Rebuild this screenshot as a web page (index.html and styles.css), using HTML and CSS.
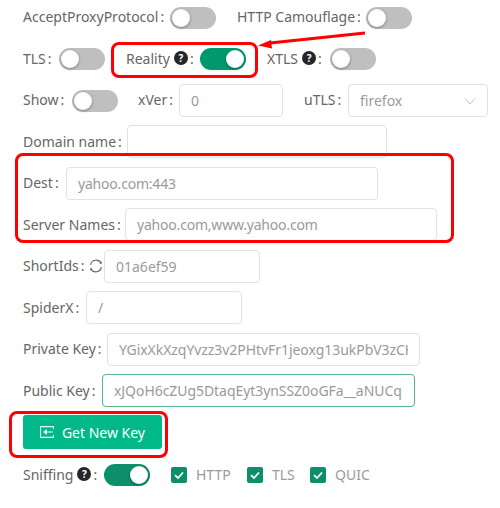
FILE: index.html
```html
<!DOCTYPE html>
<html lang="en">
<head>
<meta charset="utf-8">
<title>Reality settings</title>
<link rel="stylesheet" href="styles.css">
</head>
<body>
<main class="form">
  <div class="row">
    <span class="label w-accept">AcceptProxyProtocol<i class="colon">:</i></span>
    <span class="switch"><b class="knob"></b></span>
    <span class="label ml-21 w-camo">HTTP Camouflage<i class="colon">:</i></span>
    <span class="switch"><b class="knob"></b></span>
  </div>
  <div class="row">
    <span class="label w-tls">TLS<i class="colon">:</i></span>
    <span class="switch"><b class="knob"></b></span>
    <span class="label ml-21 w-reality">Reality<span class="help">?</span><i class="colon">:</i></span>
    <span class="switch on"><b class="knob"></b></span>
    <span class="label ml-21 w-xtls">XTLS<span class="help">?</span><i class="colon">:</i></span>
    <span class="switch"><b class="knob"></b></span>
  </div>
  <div class="row">
    <span class="label w-show">Show<i class="colon">:</i></span>
    <span class="switch"><b class="knob"></b></span>
    <span class="label ml-20 w-xver">xVer<i class="colon">:</i></span>
    <span class="input w-104">0</span>
    <span class="label ml-21 w-utls">uTLS<i class="colon">:</i></span>
    <span class="input select">firefox
      <svg class="chevron" viewBox="0 0 12 12" width="12" height="12"><path d="M1 3.500 6 9l5-5.500" fill="none" stroke="#c4c4c4" stroke-width="1"/></svg>
    </span>
  </div>
  <div class="row">
    <span class="label w-domain">Domain name<i class="colon">:</i></span>
    <span class="input w-260"></span>
  </div>
  <div class="row">
    <span class="label w-dest">Dest<i class="colon">:</i></span>
    <span class="input w-312 tight">yahoo.com:443</span>
  </div>
  <div class="row">
    <span class="label w-server">Server Names<i class="colon">:</i></span>
    <span class="input w-312 tight">yahoo.com,www.yahoo.com</span>
  </div>
  <div class="row">
    <span class="label w-short">ShortIds<i class="colon">:</i></span>
    <svg class="sync" viewBox="0 0 16 16" width="16" height="16"><path d="M2.600 6.800A5.600 5.600 0 0 1 13 5M13.400 9.200A5.600 5.600 0 0 1 3 11" fill="none" stroke="#666" stroke-width="1.200"/><path d="M13.800 3.300v2.500h-2.500zM2.200 12.700v-2.500h2.500z" fill="#666"/></svg>
    <span class="input w-156">01a6ef59</span>
  </div>
  <div class="row">
    <span class="label w-spider">SpiderX<i class="colon">:</i></span>
    <span class="input w-156">/</span>
  </div>
  <div class="row">
    <span class="label w-private">Private Key<i class="colon">:</i></span>
    <span class="input w-313 key"><span class="clip-text">YGixXkXzqYvzz3v2PHtvFr1jeoxg13ukPbV3zCHkR8</span></span>
  </div>
  <div class="row">
    <span class="label w-public">Public Key<i class="colon">:</i></span>
    <span class="input w-313 focus key">xJQoH6cZUg5DtaqEyt3ynSSZ0oGFa__aNUCq</span>
  </div>
  <div class="row">
    <button class="btn" type="button">
      <svg viewBox="0 0 14 12" width="14" height="12"><path d="M13.500 3V.6H.6v10.800h12.900V9M4 6h9M4 6l2.400-1.800v3.600z" fill="none" stroke="#e4f7f1" stroke-width="1.100"/></svg>
      Get New Key
    </button>
  </div>
  <div class="row last">
    <span class="label w-sniff">Sniffing<span class="help">?</span><i class="colon">:</i></span>
    <span class="switch on dark"><b class="knob"></b></span>
    <span class="check ml-21"><svg viewBox="0 0 16 16" width="16" height="16"><path d="M4 8.200 7 11l5-5.500" fill="none" stroke="#fff" stroke-width="1.800"/></svg></span>
    <span class="check-text w-http">HTTP</span>
    <span class="check"><svg viewBox="0 0 16 16" width="16" height="16"><path d="M4 8.200 7 11l5-5.500" fill="none" stroke="#fff" stroke-width="1.800"/></svg></span>
    <span class="check-text w-ctls">TLS</span>
    <span class="check"><svg viewBox="0 0 16 16" width="16" height="16"><path d="M4 8.200 7 11l5-5.500" fill="none" stroke="#fff" stroke-width="1.800"/></svg></span>
    <span class="check-text">QUIC</span>
  </div>
</main>
<div class="mark mark-reality"></div>
<div class="mark mark-dest"></div>
<div class="mark mark-btn"></div>
<svg class="arrow" viewBox="0 0 110 20" width="110" height="20"><path d="M107 2 12 12" stroke="#f00" stroke-width="3" fill="none"/><path d="M0 14.500 13 9l1 8.500z" fill="#f00"/></svg>
</body>
</html>
```
FILE: styles.css
```css
* { box-sizing: border-box; }
html, body { margin: 0; padding: 0; background: #fff; }
body { position: relative; width: 500px; height: 508px; overflow: hidden; font-family: "Noto Sans", "Open Sans", sans-serif; font-size: 14px; color: #666; }
.form { display: flex; flex-direction: column; gap: 8.500px; padding: 0.950px 0 0 23px; }
.row { display: flex; align-items: center; height: 33px; white-space: nowrap; }
.row.last { margin-top: 1px; }
.label { display: inline-flex; align-items: center; flex: none; padding-bottom: 1px; }
.colon { font-style: normal; margin-left: 2px; }
.ml-20 { margin-left: 20px; }
.ml-21 { margin-left: 21px; }
.w-accept { width: 147px; }
.w-camo { width: 129px; }
.w-tls { width: 36px; }
.w-reality { width: 74px; }
.w-xtls { width: 63px; }
.w-show { width: 49px; }
.w-xver { width: 41px; }
.w-utls { width: 44px; }
.w-domain { width: 104px; }
.w-dest { width: 43px; }
.w-server { width: 102px; }
.w-short { width: 65px; }
.w-spider { width: 63px; }
.w-private { width: 84px; }
.w-public { width: 79px; }
.w-sniff { width: 81px; }
.w-http { width: 51px; }
.w-ctls { width: 38px; }
.switch { position: relative; flex: none; width: 46px; height: 22px; margin-top: 1px; border-radius: 11px; background: #bfbfbf; }
.switch .knob { position: absolute; left: 2px; top: 2px; width: 18px; height: 18px; border-radius: 50%; background: #fff; box-shadow: 0 1px 3px rgba(0, 0, 0, .35); }
.switch.on { background: #00996d; }
.switch.on .knob { left: 26px; }
.switch.dark { background: #0e8f6c; }
.help { display: inline-flex; align-items: center; justify-content: center; width: 14px; height: 14px; margin-left: 4px; border-radius: 50%; background: #262626; color: #fff; font-size: 10px; font-weight: 700; line-height: 1; }
.help + .colon { margin-left: 2px; }
.input { display: flex; align-items: center; position: relative; flex: none; height: 33px; padding: 0 11px; border: 1px solid #e2e2e2; border-radius: 4px; color: #9a9a9a; background: #fff; }
.tight { letter-spacing: -0.200px; }
.key { letter-spacing: -0.060px; }
.w-104 { width: 104px; }
.w-156 { width: 156px; }
.w-260 { width: 260px; }
.w-312 { width: 312px; }
.w-313 { width: 313px; }
.select { width: 140px; }
.chevron { position: absolute; right: 11px; top: 10px; }
.clip-text { display: block; overflow: hidden; width: 100%; }
.focus { border-color: #4fb39a; }
.sync { flex: none; }
.btn { display: flex; align-items: center; gap: 8px; height: 34px; width: 139px; padding: 0 17px; border: 0; border-radius: 3px; background: #00b888; color: #fff; font: 14px "Noto Sans", "Open Sans", sans-serif; }
.check { display: inline-flex; flex: none; width: 16px; height: 16px; border-radius: 2px; background: #0e8f6c; }
.check-text { flex: none; margin-left: 9px; color: #9a9a9a; }
.mark { position: absolute; border: 3px solid #f00; border-radius: 8px; }
.mark-reality { left: 111px; top: 42px; width: 147px; height: 36px; }
.mark-dest { left: 15px; top: 153px; width: 439px; height: 90px; }
.mark-btn { left: 9px; top: 411px; width: 159px; height: 47px; }
.arrow { position: absolute; left: 258px; top: 31px; }
```
